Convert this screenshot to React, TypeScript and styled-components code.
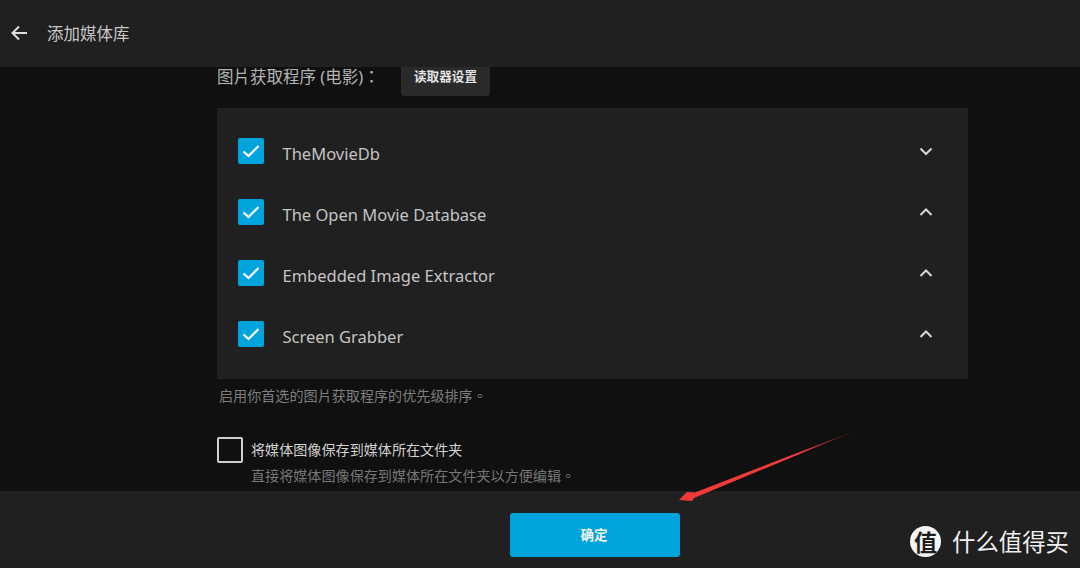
import React from "react";
import styled, { createGlobalStyle } from "styled-components";

const FONT = `"Noto Sans", "Noto Sans CJK TC", sans-serif`;

const Global = createGlobalStyle`
  html, body { margin: 0; padding: 0; background: #101010; }
  body { font-family: ${FONT}; }
`;

const Page = styled.div`
  position: relative;
  width: 1080px;
  height: 568px;
  display: flex;
  flex-direction: column;
  overflow: hidden;
  background: #101010;
`;

const Header = styled.header`
  flex: 0 0 67px;
  position: relative;
  z-index: 1;
  display: flex;
  align-items: center;
  padding-left: 10px;
  padding-bottom: 2px;
  box-sizing: border-box;
  background: #202020;
`;

const BackIcon = styled.svg`
  width: 18px;
  height: 18px;
  margin-right: 19px;
  color: #dedede;
`;

const HeaderTitle = styled.h1`
  margin: 0;
  font-size: 16.5px;
  font-weight: 400;
  color: #c8c8c8;
`;

const Main = styled.main`
  flex: 1;
  min-height: 0;
  overflow: hidden;
  display: flex;
  padding-left: 217px;
`;

const Column = styled.div`
  width: 751px;
  margin-top: -9px;
  display: flex;
  flex-direction: column;
`;

const TitleRow = styled.div`
  display: flex;
  align-items: center;
  height: 38px;
  margin-bottom: 12px;
`;

const SectionTitle = styled.span`
  font-size: 16.5px;
  line-height: 16px;
  color: #b4b4b4;
  width: 184px;
  flex: none;
`;

const SmallButton = styled.button`
  width: 89px;
  height: 38px;
  border: 0;
  border-radius: 3px;
  background: #2a2a2a;
  color: #e4e4e4;
  font: 700 12.6px ${FONT};
  padding: 0 0 3px;
`;

const Panel = styled.div`
  height: 271px;
  box-sizing: border-box;
  padding: 12px 21px 15px;
  background: #202020;
  display: flex;
  flex-direction: column;
`;

const Row = styled.div`
  flex: 0 0 61px;
  display: flex;
  align-items: center;
`;

const Check = styled.span`
  width: 26px;
  height: 26px;
  flex: none;
  border-radius: 2px;
  background: #00a4dc;
  display: flex;
  align-items: center;
  justify-content: center;
  margin-right: 18.5px;
`;

const RowLabel = styled.span`
  flex: 1;
  font-size: 16.5px;
  color: #c4c4c4;
  position: relative;
  top: 3px;
`;

const Chevron = styled.svg`
  width: 16px;
  height: 16px;
  margin-right: 13px;
  color: #d8d8d8;
`;

const Hint = styled.p`
  margin: 7px 0 0 2px;
  font-size: 14.1px;
  line-height: 19px;
  color: #7e7e7e;
`;

const OptionRow = styled.div`
  display: flex;
  margin-top: 32px;
`;

const EmptyBox = styled.span`
  width: 26px;
  height: 26px;
  flex: none;
  box-sizing: border-box;
  border: 2px solid #cfcfcf;
  border-radius: 2px;
  margin-right: 8px;
`;

const OptionText = styled.div`
  display: flex;
  flex-direction: column;
  padding-top: 3px;
`;

const OptionLabel = styled.span`
  font-size: 14.1px;
  line-height: 20px;
  color: #d2d2d2;
`;

const OptionHint = styled.span`
  font-size: 14.1px;
  line-height: 20px;
  margin-top: 6px;
  color: #777;
`;

const Footer = styled.footer`
  flex: 0 0 77px;
  box-sizing: border-box;
  background: #202020;
  display: flex;
  padding: 22px 0 0 510px;
`;

const PrimaryButton = styled.button`
  width: 170px;
  height: 44px;
  border: 0;
  border-radius: 3px;
  background: #00a4dc;
  color: #f2f2f2;
  font: 700 13.5px ${FONT};
  padding: 0 2px 2px 0;
`;

const ArrowOverlay = styled.svg`
  position: absolute;
  left: 670px;
  top: 420px;
  width: 200px;
  height: 90px;
  pointer-events: none;
`;

const Watermark = styled.div`
  position: absolute;
  left: 910px;
  top: 526px;
  display: flex;
  align-items: center;
  gap: 11px;
`;

const LogoDisc = styled.span`
  width: 31px;
  height: 31px;
  border-radius: 50%;
  background: #f4f4f4;
  color: #1c1c1c;
  display: flex;
  align-items: center;
  justify-content: center;
  font: 700 23px "Noto Sans CJK SC", sans-serif;
  line-height: 1;
`;

const LogoText = styled.span`
  font: 400 23.4px "Noto Sans CJK SC", sans-serif;
  line-height: 31px;
  color: #f0f0f0;
`;

const rows: { name: string; open: boolean }[] = [
  { name: "TheMovieDb", open: false },
  { name: "The Open Movie Database", open: true },
  { name: "Embedded Image Extractor", open: true },
  { name: "Screen Grabber", open: true },
];

export default function App() {
  return (
    <Page>
      <Global />
      <Header>
        <BackIcon viewBox="0 0 18 18" fill="none" stroke="currentColor" strokeWidth="2">
          <path d="M17 9H2.5M9 2.5 2.5 9 9 15.5" />
        </BackIcon>
        <HeaderTitle>添加媒体库</HeaderTitle>
      </Header>
      <Main>
        <Column>
          <TitleRow>
            <SectionTitle>图片获取程序 (电影)：</SectionTitle>
            <SmallButton>读取器设置</SmallButton>
          </TitleRow>
          <Panel>
            {rows.map((r) => (
              <Row key={r.name}>
                <Check>
                  <svg width="20" height="20" viewBox="0 0 20 20" fill="none" stroke="#fff" strokeWidth="2.2">
                    <path d="M2.5 10.5 7.5 15 17.5 5" />
                  </svg>
                </Check>
                <RowLabel>{r.name}</RowLabel>
                <Chevron viewBox="0 0 16 16" fill="none" stroke="currentColor" strokeWidth="2">
                  <path d={r.open ? "M2.5 11 8 5.5 13.5 11" : "M2.5 5.5 8 11 13.5 5.5"} />
                </Chevron>
              </Row>
            ))}
          </Panel>
          <Hint>启用你首选的图片获取程序的优先级排序。</Hint>
          <OptionRow>
            <EmptyBox />
            <OptionText>
              <OptionLabel>将媒体图像保存到媒体所在文件夹</OptionLabel>
              <OptionHint>直接将媒体图像保存到媒体所在文件夹以方便编辑。</OptionHint>
            </OptionText>
          </OptionRow>
        </Column>
      </Main>
      <Footer>
        <PrimaryButton>确定</PrimaryButton>
      </Footer>
      <ArrowOverlay viewBox="0 0 200 90">
        <defs>
          <linearGradient id="arrowFade" x1="192" y1="8" x2="130" y2="32" gradientUnits="userSpaceOnUse">
            <stop offset="0" stopColor="#f03a3a" stopOpacity="0" />
            <stop offset="1" stopColor="#f03a3a" />
          </linearGradient>
        </defs>
        <path d="M192 8 L25 72.5 L17 72 L9 80 L22 81 L24 78 Z" fill="url(#arrowFade)" />
      </ArrowOverlay>
      <Watermark>
        <LogoDisc>值</LogoDisc>
        <LogoText>什么值得买</LogoText>
      </Watermark>
    </Page>
  );
}
